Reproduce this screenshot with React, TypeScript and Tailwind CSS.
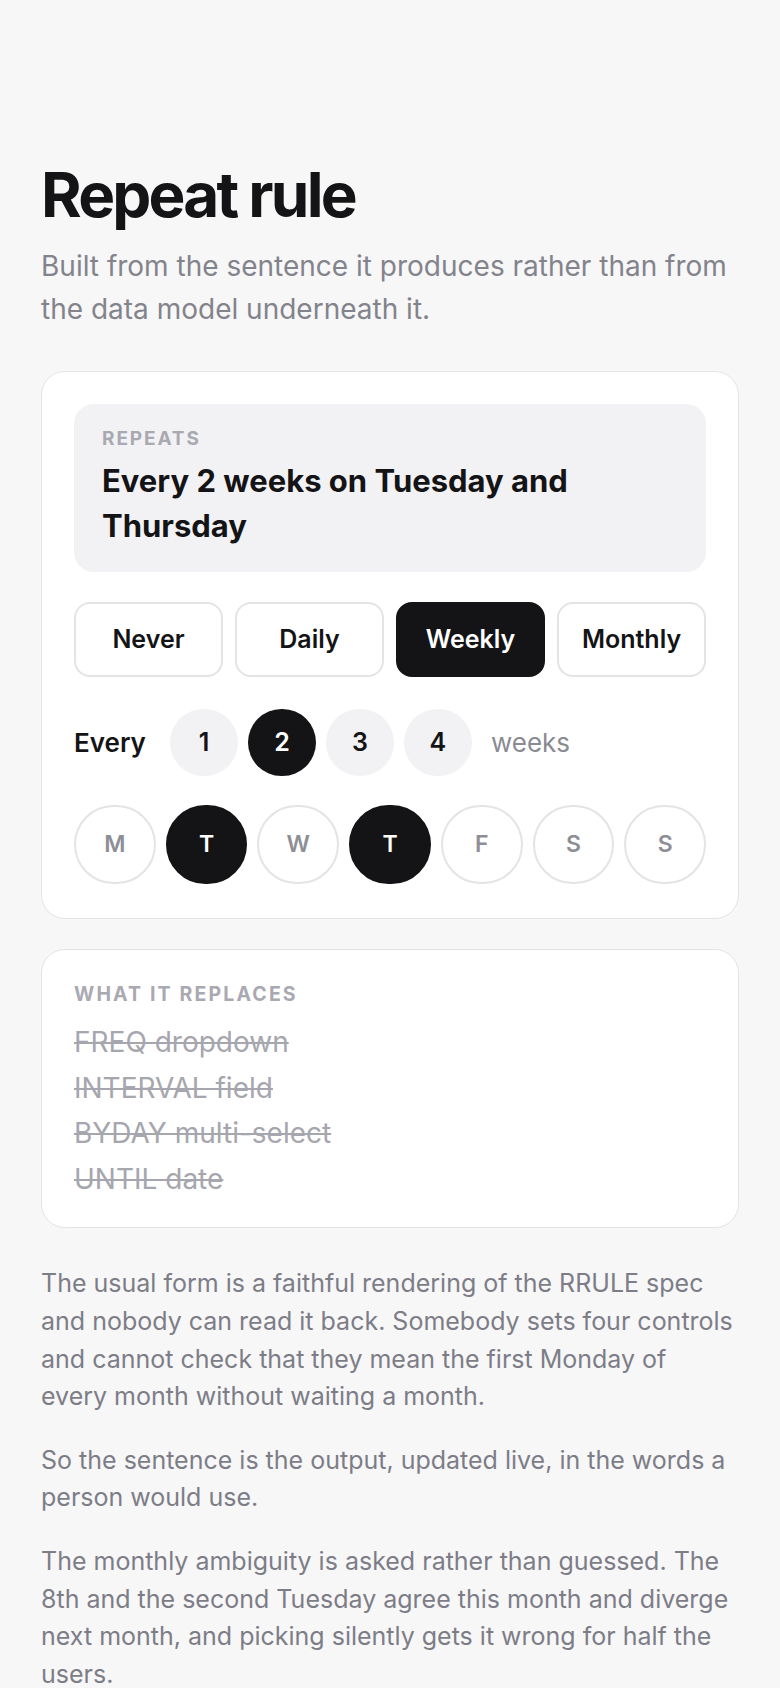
export default function App() {
  const days = [
    { d: "M", on: false },
    { d: "T", on: true },
    { d: "W", on: false },
    { d: "T", on: true },
    { d: "F", on: false },
    { d: "S", on: false },
    { d: "S", on: false },
  ]

  return (
    <div className="min-h-screen bg-[#f7f7f8] font-['Inter',sans-serif] text-[#141416]">
      <div className="px-[41px] pt-[161px] pb-10">
        <h1 className="text-[62px] leading-[68px] font-bold tracking-[-0.045em]">Repeat rule</h1>
        <p className="mt-4 text-[28px] leading-[43px] text-[#83838c]">
          Built from the sentence it produces rather than from the data model underneath it.
        </p>

        {/* Builder card */}
        <div className="mt-10 bg-white border border-[#e4e4e7] rounded-[24px] px-8 pt-8 pb-[34px]">
          <div className="bg-[#f2f2f4] rounded-[20px] px-7 pt-[23px] pb-[24px]">
            <div className="text-[19px] leading-[24px] font-bold tracking-[0.1em] text-[#a9a9b1]">REPEATS</div>
            <div className="mt-[7px] text-[31px] leading-[45px] font-bold">Every 2 weeks on Tuesday and Thursday</div>
          </div>

          <div className="mt-[30px] grid grid-cols-4 gap-3">
            {["Never", "Daily", "Weekly", "Monthly"].map((f) => (
              <button
                key={f}
                className={
                  f === "Weekly"
                    ? "h-[75px] rounded-2xl border-2 border-[#141416] bg-[#141416] text-white text-[25px] font-semibold"
                    : "h-[75px] rounded-2xl border-2 border-[#e4e4e7] bg-white text-[#141416] text-[25px] font-semibold"
                }
              >
                {f}
              </button>
            ))}
          </div>

          <div className="mt-8 flex items-center">
            <span className="text-[26px] font-semibold">Every</span>
            <div className="ml-6 flex gap-[10px]">
              {[1, 2, 3, 4].map((n) => (
                <div
                  key={n}
                  className={
                    n === 2
                      ? "w-[68px] h-[67px] rounded-full bg-[#141416] text-white flex items-center justify-center text-[25px] font-semibold"
                      : "w-[68px] h-[67px] rounded-full bg-[#f2f2f4] text-[#141416] flex items-center justify-center text-[25px] font-semibold"
                  }
                >
                  {n}
                </div>
              ))}
            </div>
            <span className="ml-[19px] text-[26px] text-[#8a8a93]">weeks</span>
          </div>

          <div className="mt-[29px] grid grid-cols-7 gap-2.5">
            {days.map((x, i) => (
              <div
                key={i}
                className={
                  x.on
                    ? "h-[79px] rounded-full border-2 border-[#141416] bg-[#141416] text-white flex items-center justify-center text-[23px] font-semibold"
                    : "h-[79px] rounded-full border-2 border-[#e4e4e7] bg-white text-[#8e8e96] flex items-center justify-center text-[23px] font-semibold"
                }
              >
                {x.d}
              </div>
            ))}
          </div>
        </div>

        {/* What it replaces */}
        <div className="mt-[30px] bg-white border border-[#e4e4e7] rounded-[24px] px-8 pt-8 pb-[25px]">
          <div className="text-[19.5px] leading-[24px] font-bold tracking-[0.11em] text-[#a9a9b1]">WHAT IT REPLACES</div>
          <ul className="mt-[14px] text-[28px] leading-[45.5px] text-[#a6a6ae] line-through">
            <li>FREQ dropdown</li>
            <li>INTERVAL field</li>
            <li>BYDAY multi-select</li>
            <li>UNTIL date</li>
          </ul>
        </div>

        <div className="mt-[37px] max-w-[694px] flex flex-col gap-[25.5px] text-[25px] leading-[37.8px] text-[#7d7d87]">
          <p>
            The usual form is a faithful rendering of the RRULE spec and nobody can read it back. Somebody sets four
            controls and cannot check that they mean the first Monday of every month without waiting a month.
          </p>
          <p>So the sentence is the output, updated live, in the words a person would use.</p>
          <p>
            The monthly ambiguity is asked rather than guessed. The 8th and the second Tuesday agree this month and
            diverge next month, and picking silently gets it wrong for half the users.
          </p>
        </div>
      </div>
    </div>
  )
}
